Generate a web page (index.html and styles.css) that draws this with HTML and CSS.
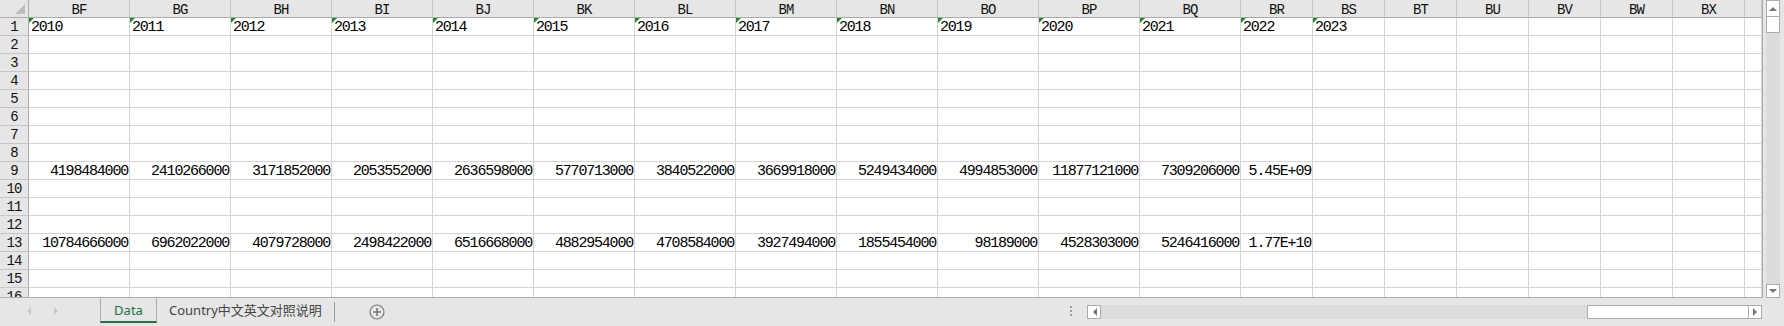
FILE: index.html
```html
<!DOCTYPE html>
<html lang="zh">
<head>
    <meta charset="UTF-8">
    <title>Data</title>
    <link rel="stylesheet" href="styles.css">
</head>
<body>
    <div class="app">
        <div class="main">
            <div class="sheet" id="sheet"></div>
            <div class="vbar">
                <div class="vscroll">
                    <div class="sbtn vup">
                        <svg width="8" height="5" viewBox="0 0 8 5"><path d="M0 5 L4 1 L8 5 Z" fill="#777"/></svg>
                    </div>
                    <div class="vthumb"></div>
                    <div class="vtrack"></div>
                    <div class="sbtn vdown">
                        <svg width="8" height="5" viewBox="0 0 8 5"><path d="M0 0 L4 4 L8 0 Z" fill="#777"/></svg>
                    </div>
                </div>
            </div>
        </div>
        <div class="tabbar">
            <div class="nav">
                <svg width="5" height="8" viewBox="0 0 5 8"><path d="M5 0 L1 4 L5 8 Z" fill="#c8c8c8"/></svg>
                <svg width="5" height="8" viewBox="0 0 5 8"><path d="M0 0 L4 4 L0 8 Z" fill="#c8c8c8"/></svg>
            </div>
            <div class="tab active">Data</div>
            <div class="tab">Country中文英文对照说明</div>
            <div class="add">
                <svg width="16" height="16" viewBox="0 0 16 16">
                    <circle cx="8" cy="8" r="7" fill="none" stroke="#7a7a7a" stroke-width="1.2"/>
                    <path d="M8 4 V12 M4 8 H12" stroke="#7a7a7a" stroke-width="1.6"/>
                </svg>
            </div>
            <div class="spacer"></div>
            <div class="dots"><span></span><span></span><span></span></div>
            <div class="hscroll">
                <div class="sbtn hleft">
                    <svg width="5" height="8" viewBox="0 0 5 8"><path d="M5 0 L1 4 L5 8 Z" fill="#777"/></svg>
                </div>
                <div class="htrack"></div>
                <div class="hthumb"></div>
                <div class="sbtn hright">
                    <svg width="5" height="8" viewBox="0 0 5 8"><path d="M0 0 L4 4 L0 8 Z" fill="#777"/></svg>
                </div>
            </div>
            <div class="corner"></div>
        </div>
    </div>
    <script>
        const sheet = document.getElementById("sheet");

        const letters = ["BF", "BG", "BH", "BI", "BJ", "BK", "BL", "BM", "BN", "BO",
            "BP", "BQ", "BR", "BS", "BT", "BU", "BV", "BW", "BX", ""];

        // filas con datos numericos
        const data = {
            9: ["4198484000", "2410266000", "3171852000", "2053552000", "2636598000", "5770713000",
                "3840522000", "3669918000", "5249434000", "4994853000", "11877121000", "7309206000", "5.45E+09"],
            13: ["10784666000", "6962022000", "4079728000", "2498422000", "6516668000", "4882954000",
                "4708584000", "3927494000", "1855454000", "98189000", "4528303000", "5246416000", "1.77E+10"]
        };

        function addCell(cls, text) {
            const cell = document.createElement("div");
            cell.className = cls;
            cell.textContent = text || "";
            sheet.appendChild(cell);
            return cell;
        }

        // cabecera de columnas
        const corner = addCell("head corner-cell");
        corner.innerHTML = '<span class="corner-tri"></span>';
        letters.forEach((l) => addCell("head", l));

        for (let r = 1; r <= 16; r++) {
            addCell("rowhead", r);
            letters.forEach((l, i) => {
                if (r === 1 && i < 14) {
                    addCell("cell text flag", String(2010 + i));
                } else if (data[r] && data[r][i]) {
                    addCell("cell num", data[r][i]);
                } else {
                    addCell("cell");
                }
            });
        }
    </script>
</body>
</html>
```

FILE: styles.css
```css
:root {
    --head-bg: #e6e6e6;
    --grid: #d4d4d4;
    --head-line: #c6c6c6;
    --edge: #ababab;
    --green: #217346;
}

* {
    box-sizing: border-box;
}

body {
    margin: 0;
    background: var(--head-bg);
    font-family: "Liberation Mono", monospace;
}

.app {
    width: 1784px;
    height: 326px;
    display: flex;
    flex-direction: column;
    overflow: hidden;
}

.main {
    display: flex;
    height: 298px;
}

/* hoja de calculo */
.sheet {
    width: 1763px;
    height: 298px;
    display: grid;
    grid-template-columns: 29px repeat(12, 101px) repeat(7, 72px) 17px;
    grid-auto-rows: 18px;
    background: #fff;
    border-right: 1px solid var(--edge);
    border-bottom: 1px solid var(--edge);
    overflow: hidden;
}

.head {
    background: var(--head-bg);
    border-right: 1px solid var(--head-line);
    border-bottom: 1px solid var(--edge);
    text-align: center;
    font-size: 14px;
    letter-spacing: -1px;
    line-height: 14px;
    padding-top: 3px;
    color: #111;
    overflow: hidden;
}

.corner-cell {
    display: flex;
    justify-content: flex-end;
    align-items: flex-end;
    padding: 0 3px 3px 0;
    border-right-color: var(--edge);
}

.corner-tri {
    width: 0;
    height: 0;
    border-bottom: 10px solid #bdbdbd;
    border-left: 10px solid transparent;
}

.rowhead {
    background: var(--head-bg);
    border-right: 1px solid var(--edge);
    border-bottom: 1px solid var(--head-line);
    text-align: center;
    font-size: 14px;
    letter-spacing: -1px;
    line-height: 15px;
    padding-top: 2px;
    color: #111;
    overflow: hidden;
}

.cell {
    position: relative;
    border-right: 1px solid var(--grid);
    border-bottom: 1px solid var(--grid);
    font-size: 15px;
    letter-spacing: -1.2px;
    line-height: 15px;
    padding: 2px 1px 0 2px;
    color: #000;
    white-space: nowrap;
    overflow: hidden;
}

.num {
    text-align: right;
}

.flag::before {
    content: "";
    position: absolute;
    top: 0;
    left: 0;
    width: 0;
    height: 0;
    border-top: 5px solid #1e8a2e;
    border-right: 5px solid transparent;
}

/* barra vertical */
.vbar {
    width: 21px;
    padding-left: 3px;
}

.vscroll {
    width: 14px;
    height: 298px;
    display: flex;
    flex-direction: column;
    background: #dcdcdc;
}

.sbtn {
    background: #fff;
    border: 1px solid var(--edge);
    display: flex;
    align-items: center;
    justify-content: center;
}

.vup {
    height: 17px;
}

.vthumb {
    height: 16px;
    background: #fff;
    border: 1px solid var(--edge);
    border-top: none;
}

.vtrack {
    flex: 1;
}

.vdown {
    height: 14px;
}

/* pestanas */
.tabbar {
    height: 28px;
    display: flex;
    align-items: flex-start;
    font-family: "Noto Sans", "Noto Sans CJK SC", sans-serif;
    font-size: 13px;
}

.nav {
    width: 100px;
    height: 25px;
    display: flex;
    align-items: center;
    gap: 23px;
    padding-left: 26px;
}

.tab {
    height: 25px;
    line-height: 24px;
    padding: 0 12px;
    color: #444;
    position: relative;
}

.tab.active {
    width: 57px;
    padding: 0;
    text-align: center;
    color: var(--green);
    border-left: 1px solid var(--edge);
    border-right: 1px solid var(--edge);
    border-bottom: 2px solid var(--green);
}

.tab.active + .tab {
    width: 178px;
}

.tab.active + .tab::after {
    content: "";
    position: absolute;
    right: 0;
    top: 4px;
    height: 20px;
    border-right: 1px solid #9a9a9a;
}

.add {
    margin: 6px 0 0 34px;
    height: 16px;
}

.spacer {
    flex: 1;
}

.dots {
    width: 16px;
    margin: 8px 8px 0 0;
    display: flex;
    flex-direction: column;
    align-items: center;
    gap: 2px;
}

.dots span {
    width: 2px;
    height: 2px;
    background: #9a9a9a;
}

.hscroll {
    width: 675px;
    height: 14px;
    margin-top: 7px;
    display: flex;
    background: #dcdcdc;
}

.hleft,
.hright {
    width: 14px;
}

.htrack {
    flex: 1;
}

.hthumb {
    width: 161px;
    background: #fff;
    border: 1px solid var(--edge);
    border-right: none;
}

.corner {
    width: 22px;
}
```
